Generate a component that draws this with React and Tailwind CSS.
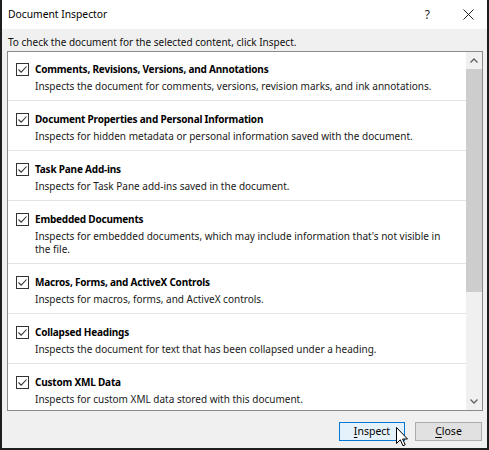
import React from "react";

const items = [
  { t: "Comments, Revisions, Versions, and Annotations", d: "Inspects the document for comments, versions, revision marks, and ink annotations." },
  { t: "Document Properties and Personal Information", d: "Inspects for hidden metadata or personal information saved with the document." },
  { t: "Task Pane Add-ins", d: "Inspects for Task Pane add-ins saved in the document." },
  { t: "Embedded Documents", d: "Inspects for embedded documents, which may include information that's not visible in the file." },
  { t: "Macros, Forms, and ActiveX Controls", d: "Inspects for macros, forms, and ActiveX controls." },
  { t: "Collapsed Headings", d: "Inspects the document for text that has been collapsed under a heading." },
  { t: "Custom XML Data", d: "Inspects for custom XML data stored with this document." },
];

function Check() {
  return (
    <div className="w-[13px] h-[13px] border border-[#333333] bg-white flex items-center justify-center shrink-0">
      <svg width="11" height="11" viewBox="0 0 11 11">
        <path d="M1.5 5.5 L4.2 8.2 L9.5 2.5" fill="none" stroke="#333333" strokeWidth="1.1" />
      </svg>
    </div>
  );
}

function Item({ t, d, first }) {
  return (
    <div className={`flex gap-[6px] pl-[8px] pr-[16px] border-b border-[#e3e3e3] pb-[7px] ${first ? "pt-[9px]" : "pt-[10px]"}`}>
      <div className="pt-[2px]">
        <Check />
      </div>
      <div className="flex flex-col">
        <div className="font-bold leading-[16px] text-[10px] tracking-[-0.2px] text-black">{t}</div>
        <div className="mt-[3px] leading-[13px] text-[10px] text-[#1a1a1a]">{d}</div>
      </div>
    </div>
  );
}

export default function App() {
  return (
    <div
      className="relative w-[489px] h-[450px] bg-[#f0f0f0] border-l-2 border-r-2 border-b-2 border-[#1e1e1e] flex flex-col overflow-hidden text-black"
      style={{ fontFamily: '"Noto Sans", sans-serif' }}
    >
      <div className="h-[29px] bg-white flex items-center pl-[6px] pr-[13px] shrink-0">
        <div className="text-[10.3px] text-black flex-1">Document Inspector</div>
        <div className="text-[12px] text-[#222] mr-[33px]">?</div>
        <svg width="11" height="11" viewBox="0 0 11 11">
          <path d="M0.5 0.5 L10.5 10.5 M10.5 0.5 L0.5 10.5" stroke="#222" strokeWidth="1" />
        </svg>
      </div>
      <div className="pl-[6px] pt-[5px] h-[22px] leading-[16px] text-[10px] text-[#111]">
        To check the document for the selected content, click Inspect.
      </div>
      <div className="ml-[5px] mr-[4px] h-[360px] border border-[#8a8a8a] bg-white flex">
        <div className="flex-1 overflow-hidden">
          {items.map((it, i) => (
            <Item key={i} t={it.t} d={it.d} first={i === 0} />
          ))}
        </div>
        <div className="w-[16px] bg-[#f0f0f0] flex flex-col items-center">
          <div className="h-[17px] flex items-center justify-center">
            <svg width="8" height="5" viewBox="0 0 8 5">
              <path d="M0.5 4.5 L4 1 L7.5 4.5" fill="none" stroke="#606060" strokeWidth="1.3" />
            </svg>
          </div>
          <div className="w-full h-[223px] bg-[#cdcdcd]"></div>
          <div className="flex-1"></div>
          <div className="h-[17px] flex items-center justify-center">
            <svg width="8" height="5" viewBox="0 0 8 5">
              <path d="M0.5 0.5 L4 4 L7.5 0.5" fill="none" stroke="#606060" strokeWidth="1.3" />
            </svg>
          </div>
        </div>
      </div>
      <div className="flex justify-end gap-[10px] pr-[5px] mt-[11px]">
        <div className="w-[66px] h-[19px] border border-[#0078d7] bg-[#e5f1fb] flex items-center justify-center text-[10.5px] text-black">
          <span className="underline decoration-1 underline-offset-2" style={{ textDecorationSkipInk: "none" }}>I</span>
          <span>nspect</span>
        </div>
        <div className="w-[67px] h-[19px] border border-[#adadad] bg-[#e1e1e1] flex items-center justify-center text-[10.5px] text-black">
          <span className="underline decoration-1 underline-offset-2">C</span>
          <span>lose</span>
        </div>
      </div>
      <svg className="absolute left-[394px] top-[427px]" width="13" height="20" viewBox="0 0 13 20">
        <path d="M0.5 0.5 L0.5 16.5 L4.3 12.8 L7 18.8 L9.2 17.8 L6.6 12 L11.5 12 Z" fill="white" stroke="black" strokeWidth="1" strokeLinejoin="miter" />
      </svg>
    </div>
  );
}
